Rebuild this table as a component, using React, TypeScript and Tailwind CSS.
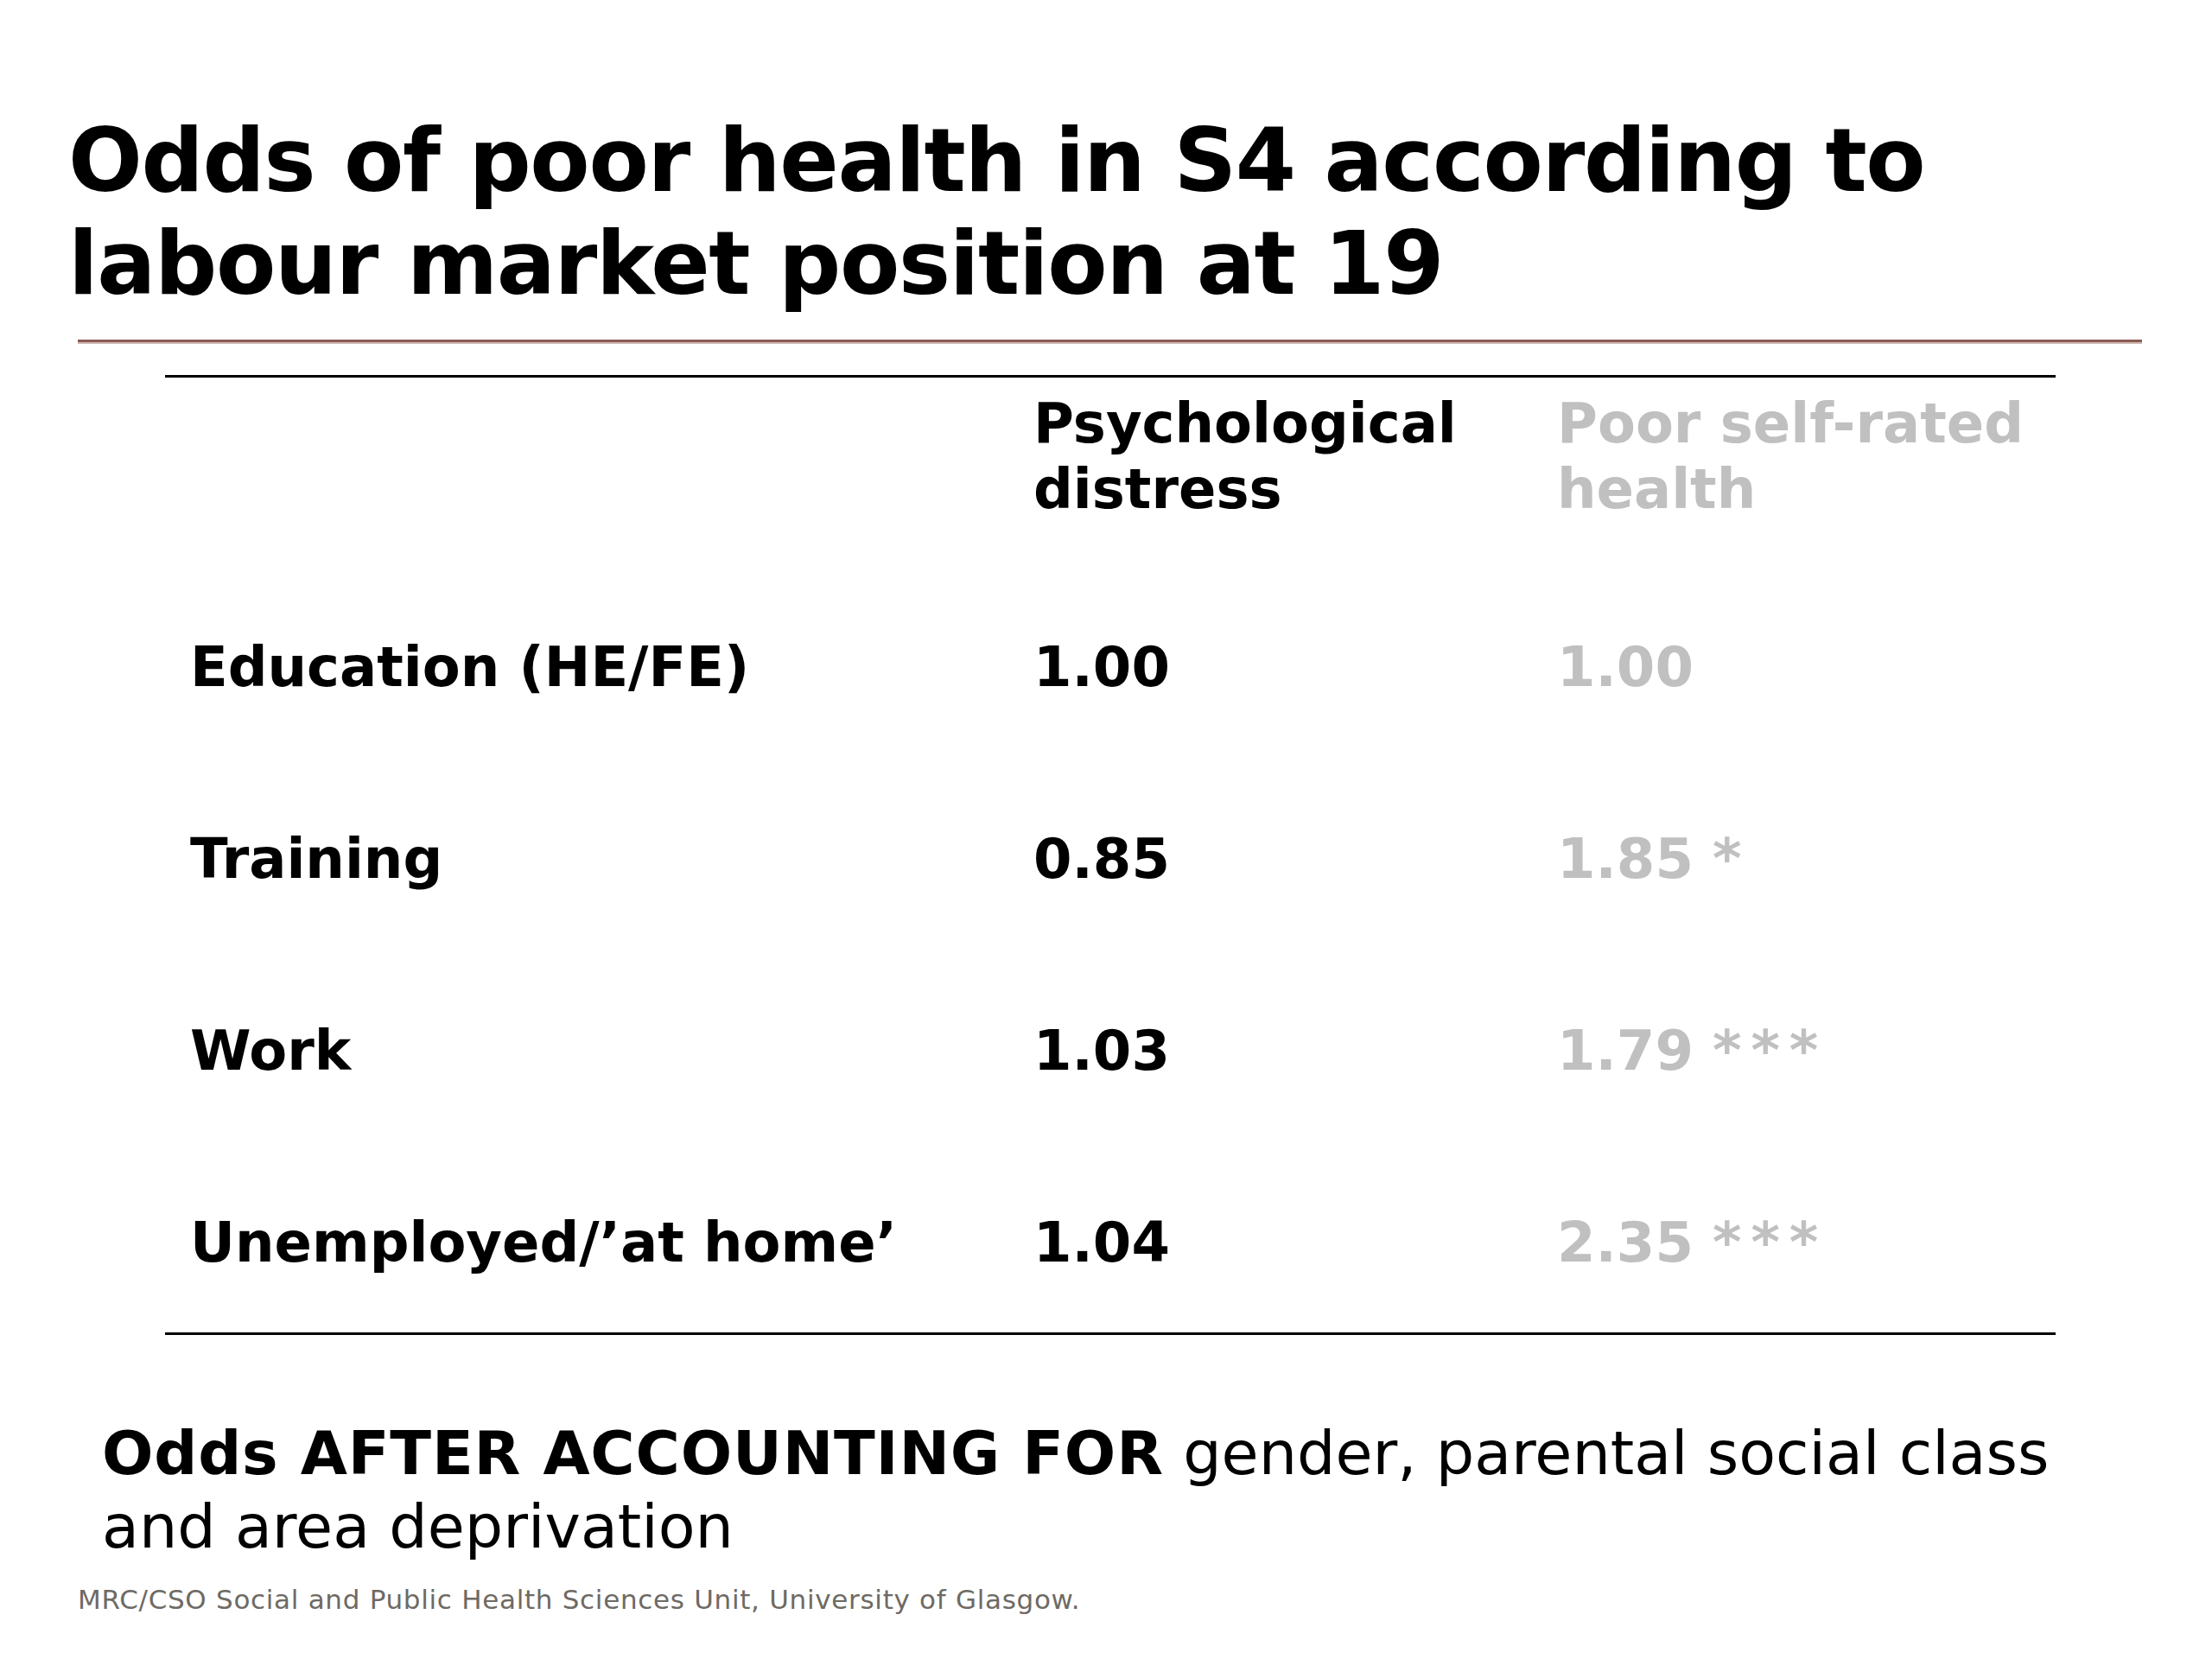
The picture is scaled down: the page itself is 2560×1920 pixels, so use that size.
const rows = [
  { label: "Education (HE/FE)", distress: "1.00", health: "1.00", stars: "" },
  { label: "Training", distress: "0.85", health: "1.85", stars: "*" },
  { label: "Work", distress: "1.03", health: "1.79", stars: "***" },
  { label: "Unemployed/\u2019at home\u2019", distress: "1.04", health: "2.35", stars: "***" },
];

export default function App() {
  return (
    <div className="w-[2560px] h-[1920px] bg-white text-black font-['DejaVu_Sans','Liberation_Sans',sans-serif] flex flex-col">
      {/* slide title */}
      <h1 className="mt-[127px] pl-[79px] text-[101px] leading-[118.6px] font-bold tracking-[-1.35px] whitespace-nowrap">
        Odds of poor health in S4 according to
        <br />
        labour market position at 19
      </h1>
      <div className="mt-[29px] ml-[90px] w-[2389px] h-[3px] bg-[#8a5a55] border-b-2 border-[#cdb8b0] box-content" />

      {/* table */}
      <div className="mt-[36px] ml-[191px] w-[2188px] border-t-[3px] border-b-[3px] border-black pt-[15px] pb-[66px]">
        <div className="grid grid-cols-[976px_606px_1fr] pl-[29px] text-[64px] leading-[76px] font-bold">
          <div />
          <div>
            Psychological
            <br />
            distress
          </div>
          <div className="text-[#c0c0c0]">
            Poor self-rated
            <br />
            health
          </div>
        </div>
        <div className="mt-[130px] flex flex-col gap-[146px] pl-[29px] text-[64px] leading-[76px] font-bold">
          {rows.map((r) => (
            <div key={r.label} className="grid grid-cols-[976px_606px_1fr] whitespace-nowrap">
              <div>{r.label}</div>
              <div>{r.distress}</div>
              <div className="text-[#c0c0c0]">
                {r.health}
                {r.stars && (
                  <span className="ml-[22px] font-semibold tracking-[11px]">{r.stars}</span>
                )}
              </div>
            </div>
          ))}
        </div>
      </div>

      {/* note */}
      <p className="mt-[95px] pl-[118px] text-[70px] leading-[85px] whitespace-nowrap">
        <span className="font-bold tracking-[0.8px]">Odds AFTER ACCOUNTING FOR</span> gender, parental social class
        <br />
        and area deprivation
      </p>
      <div className="mt-[24px] pl-[90px] text-[31px] leading-[34px] tracking-[0.7px] text-[#6e6a64] whitespace-nowrap">
        MRC/CSO Social and Public Health Sciences Unit, University of Glasgow.
      </div>
    </div>
  );
}
